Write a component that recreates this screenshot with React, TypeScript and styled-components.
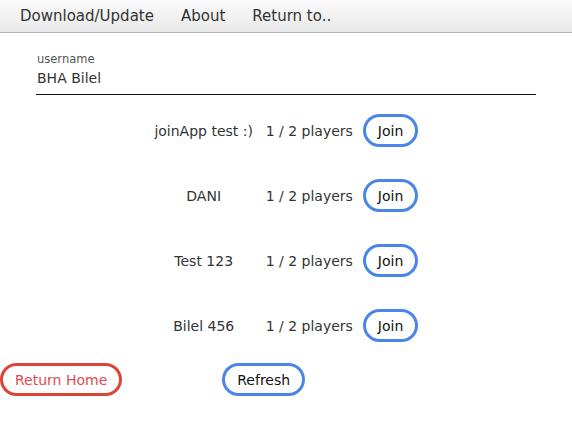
import styled, { createGlobalStyle } from "styled-components";

const GlobalStyle = createGlobalStyle`
  body {
    margin: 0;
    background: #fff;
    font-family: "DejaVu Sans", "Liberation Sans", sans-serif;
    color: #222;
  }
`;

const MenuBar = styled.div`
  height: 33px;
  display: flex;
  align-items: center;
  padding-left: 20px;
  gap: 27px;
  background: linear-gradient(#fbfbfb, #e9e9e9);
  border-bottom: 1px solid #b5b5b5;
  box-sizing: border-box;
`;

const MenuItem = styled.span`
  font-size: 15px;
  color: #333;
  cursor: pointer;
`;

const Field = styled.div`
  margin: 19px 36px 0 36px;
  border-bottom: 1px solid #111;
  padding: 0 1px 8px 1px;
`;

const FieldLabel = styled.div`
  font-size: 11.5px;
  color: #555;
`;

const FieldValue = styled.div`
  font-size: 14px;
  color: #333;
  margin-top: 4px;
`;

const Rooms = styled.div`
  display: flex;
  flex-direction: column;
  align-items: center;
  gap: 32px;
  margin-top: 19px;
`;

const Room = styled.div`
  display: flex;
  align-items: center;
`;

const RoomName = styled.span`
  width: 100px;
  text-align: center;
  font-size: 14px;
  color: #333;
`;

const Players = styled.span`
  margin: 0 10px 0 12px;
  font-size: 14px;
  color: #333;
`;

const Pill = styled.button<{ $tone: "blue" | "red" }>`
  height: 33px;
  box-sizing: border-box;
  padding: 0 12px;
  border-radius: 17px;
  border: 3px solid ${(p) => (p.$tone === "red" ? "#db4437" : "#4a86e8")};
  background: #fff;
  color: ${(p) => (p.$tone === "red" ? "#e04a55" : "#111")};
  font-family: inherit;
  font-size: 14px;
  cursor: pointer;
`;

const Footer = styled.div`
  display: flex;
  align-items: center;
  gap: 100px;
  margin-top: 21px;
`;

const rooms = [
  { name: "joinApp test :)", players: "1 / 2 players" },
  { name: "DANI", players: "1 / 2 players" },
  { name: "Test 123", players: "1 / 2 players" },
  { name: "Bilel 456", players: "1 / 2 players" },
];

const App = () => {
  return (
    <div>
      <GlobalStyle />
      <MenuBar>
        <MenuItem>Download/Update</MenuItem>
        <MenuItem>About</MenuItem>
        <MenuItem>Return to..</MenuItem>
      </MenuBar>
      <Field>
        <FieldLabel>username</FieldLabel>
        <FieldValue>BHA Bilel</FieldValue>
      </Field>
      <Rooms>
        {rooms.map((r) => (
          <Room key={r.name}>
            <RoomName>{r.name}</RoomName>
            <Players>{r.players}</Players>
            <Pill $tone="blue">Join</Pill>
          </Room>
        ))}
      </Rooms>
      <Footer>
        <Pill $tone="red">Return Home</Pill>
        <Pill $tone="blue">Refresh</Pill>
      </Footer>
    </div>
  );
};

export default App;
